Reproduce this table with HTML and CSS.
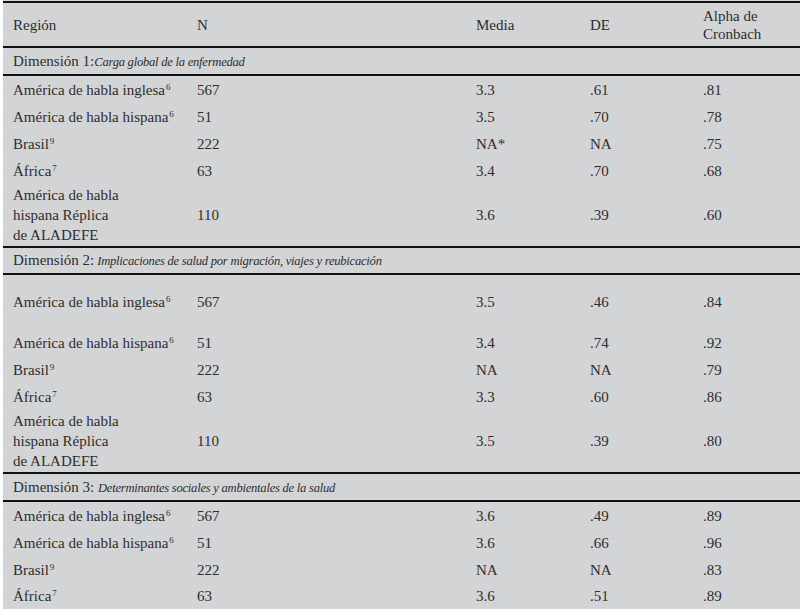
FILE: index.html
```html
<!DOCTYPE html>
<html lang="es">
<head>
<meta charset="utf-8">
<title>Tabla</title>
<link rel="stylesheet" href="styles.css">
</head>
<body>
<div class="sheet" role="table">
  <div class="tr head" role="row">
    <div class="cell" role="columnheader">Región</div>
    <div class="cell" role="columnheader">N</div>
    <div class="cell" role="columnheader">Media</div>
    <div class="cell" role="columnheader">DE</div>
    <div class="cell" role="columnheader"><span>Alpha de<br>Cronbach</span></div>
  </div>

  <div class="dim" role="row"><span>Dimensión 1:<em>Carga global de la enfermedad</em></span></div>
  <div class="tr" role="row"><div class="cell"><span>América de habla inglesa<sup>6</sup></span></div><div class="cell">567</div><div class="cell">3.3</div><div class="cell">.61</div><div class="cell">.81</div></div>
  <div class="tr" role="row"><div class="cell"><span>América de habla hispana<sup>6</sup></span></div><div class="cell">51</div><div class="cell">3.5</div><div class="cell">.70</div><div class="cell">.78</div></div>
  <div class="tr" role="row"><div class="cell"><span>Brasil<sup>9</sup></span></div><div class="cell">222</div><div class="cell">NA*</div><div class="cell">NA</div><div class="cell">.75</div></div>
  <div class="tr" role="row"><div class="cell"><span>África<sup>7</sup></span></div><div class="cell">63</div><div class="cell">3.4</div><div class="cell">.70</div><div class="cell">.68</div></div>
  <div class="tr block" role="row"><div class="cell"><span>América de habla<br>hispana Réplica<br>de ALADEFE</span></div><div class="cell">110</div><div class="cell">3.6</div><div class="cell">.39</div><div class="cell">.60</div></div>

  <div class="dim d2" role="row"><span>Dimensión 2:<span class="sp"></span><em>Implicaciones de salud por migración, viajes y reubicación</em></span></div>
  <div class="tr tall" role="row"><div class="cell"><span>América de habla inglesa<sup>6</sup></span></div><div class="cell">567</div><div class="cell">3.5</div><div class="cell">.46</div><div class="cell">.84</div></div>
  <div class="tr" role="row"><div class="cell"><span>América de habla hispana<sup>6</sup></span></div><div class="cell">51</div><div class="cell">3.4</div><div class="cell">.74</div><div class="cell">.92</div></div>
  <div class="tr" role="row"><div class="cell"><span>Brasil<sup>9</sup></span></div><div class="cell">222</div><div class="cell">NA</div><div class="cell">NA</div><div class="cell">.79</div></div>
  <div class="tr" role="row"><div class="cell"><span>África<sup>7</sup></span></div><div class="cell">63</div><div class="cell">3.3</div><div class="cell">.60</div><div class="cell">.86</div></div>
  <div class="tr block" role="row"><div class="cell"><span>América de habla<br>hispana Réplica<br>de ALADEFE</span></div><div class="cell">110</div><div class="cell">3.5</div><div class="cell">.39</div><div class="cell">.80</div></div>

  <div class="dim" role="row"><span>Dimensión 3: <em>Determinantes sociales y ambientales de la salud</em></span></div>
  <div class="tr" role="row"><div class="cell"><span>América de habla inglesa<sup>6</sup></span></div><div class="cell">567</div><div class="cell">3.6</div><div class="cell">.49</div><div class="cell">.89</div></div>
  <div class="tr" role="row"><div class="cell"><span>América de habla hispana<sup>6</sup></span></div><div class="cell">51</div><div class="cell">3.6</div><div class="cell">.66</div><div class="cell">.96</div></div>
  <div class="tr" role="row"><div class="cell"><span>Brasil<sup>9</sup></span></div><div class="cell">222</div><div class="cell">NA</div><div class="cell">NA</div><div class="cell">.83</div></div>
  <div class="tr last" role="row"><div class="cell"><span>África<sup>7</sup></span></div><div class="cell">63</div><div class="cell">3.6</div><div class="cell">.51</div><div class="cell">.89</div></div>
</div>
</body>
</html>
```

FILE: styles.css
```css
*, *::before, *::after {
  box-sizing: border-box;
}

html, body {
  margin: 0;
  padding: 0;
  background: #ffffff;
}

.sheet {
  margin-left: 3px;
  width: 797px;
  padding-top: 1px;
  background: #d3d4d6;
  font-family: "Liberation Serif", "Times New Roman", serif;
  font-size: 15px;
  line-height: 18px;
  color: #2e2e2e;
}

.tr {
  display: grid;
  grid-template-columns: 184px 279px 114px 113px 107px;
  height: 27px;
}

.cell {
  display: flex;
  align-items: center;
  padding-left: 10px;
  white-space: nowrap;
}

.head {
  height: 47px;
  border-top: 2px solid #111;
  border-bottom: 2px solid #111;
}

.dim {
  display: flex;
  align-items: center;
  height: 28px;
  padding-left: 10px;
  border-bottom: 2px solid #111;
  white-space: nowrap;
}

.dim.d2 {
  height: 27px;
}

.dim em {
  font-style: italic;
  font-size: 12.6px;
  letter-spacing: -0.25px;
}

.dim .sp {
  display: inline-block;
  width: 3px;
}

.tall {
  height: 54px;
}

.block {
  height: 64px;
  line-height: 20px;
  border-bottom: 2px solid #111;
}

.last {
  height: 26px;
}

sup {
  font-size: 9px;
  line-height: 0;
  vertical-align: 5px;
  margin-left: 1px;
}
```
